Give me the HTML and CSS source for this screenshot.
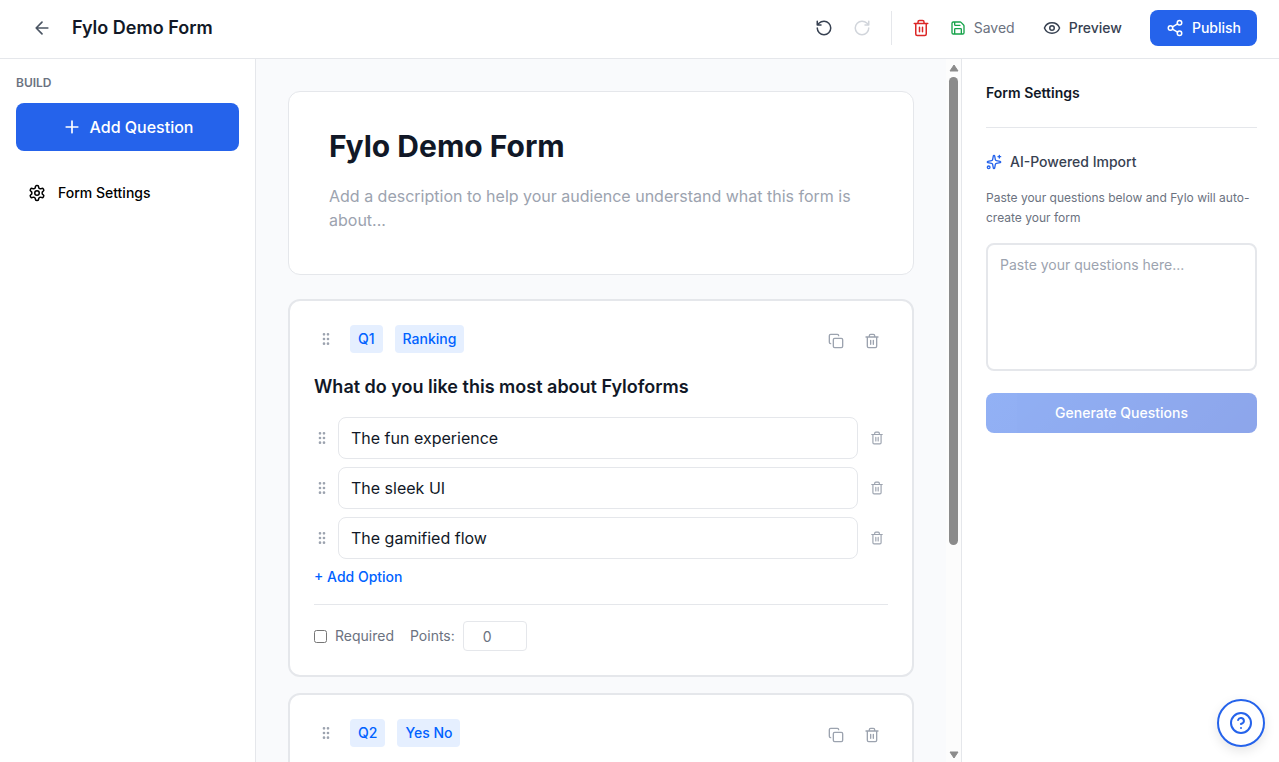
FILE: index.html
```html
<!DOCTYPE html>
<html lang="en">
<head>
    <meta charset="UTF-8">
    <meta name="viewport" content="width=device-width, initial-scale=1.0">
    <title>Fylo Demo Form</title>
    <link rel="stylesheet" href="styles.css">
</head>
<body>
    <!-- Shared icons -->
    <svg class="icon-defs" aria-hidden="true">
        <symbol id="icon-trash" viewBox="0 0 24 24">
            <path d="M3 6h18M19 6v14a2 2 0 0 1-2 2H7a2 2 0 0 1-2-2V6M8 6V4a2 2 0 0 1 2-2h4a2 2 0 0 1 2 2v2M10 11v6M14 11v6"/>
        </symbol>
        <symbol id="icon-copy" viewBox="0 0 24 24">
            <rect x="8" y="8" width="14" height="14" rx="2"/>
            <path d="M4 16c-1.1 0-2-.9-2-2V4c0-1.1.9-2 2-2h10c1.1 0 2 .9 2 2"/>
        </symbol>
        <symbol id="icon-grip" viewBox="0 0 24 24">
            <circle cx="9" cy="5" r="1"/><circle cx="9" cy="12" r="1"/><circle cx="9" cy="19" r="1"/>
            <circle cx="15" cy="5" r="1"/><circle cx="15" cy="12" r="1"/><circle cx="15" cy="19" r="1"/>
        </symbol>
    </svg>

    <header class="topbar">
        <div class="topbar-left">
            <button class="icon-btn back-btn" aria-label="Back">
                <svg class="icon icon-20" viewBox="0 0 24 24"><path d="m12 19-7-7 7-7M19 12H5"/></svg>
            </button>
            <h1 class="topbar-title">Fylo Demo Form</h1>
        </div>
        <div class="topbar-right">
            <div class="tools">
                <div class="history">
                    <button class="icon-btn undo-btn" aria-label="Undo">
                        <svg class="icon icon-18" viewBox="0 0 24 24"><path d="M3 12a9 9 0 1 0 9-9 9.75 9.75 0 0 0-6.74 2.74L3 8M3 3v5h5"/></svg>
                    </button>
                    <button class="icon-btn redo-btn" aria-label="Redo" disabled>
                        <svg class="icon icon-18" viewBox="0 0 24 24"><path d="M21 12a9 9 0 1 1-9-9c2.52 0 4.93 1 6.74 2.74L21 8M21 3v5h-5"/></svg>
                    </button>
                </div>
                <span class="divider"></span>
                <button class="icon-btn delete-btn" aria-label="Delete form">
                    <svg class="icon icon-18"><use href="#icon-trash"/></svg>
                </button>
            </div>
            <div class="actions">
                <span class="save-status">
                    <svg class="icon icon-16" viewBox="0 0 24 24"><path d="M15.2 3a2 2 0 0 1 1.4.6l3.8 3.8a2 2 0 0 1 .6 1.4V19a2 2 0 0 1-2 2H5a2 2 0 0 1-2-2V5a2 2 0 0 1 2-2zM17 21v-7a1 1 0 0 0-1-1H8a1 1 0 0 0-1 1v7M7 3v4a1 1 0 0 0 1 1h7"/></svg>
                    Saved
                </span>
                <button class="btn preview-btn">
                    <svg class="icon icon-18" viewBox="0 0 24 24"><path d="M2.06 12.35a1 1 0 0 1 0-.7 10.75 10.75 0 0 1 19.88 0 1 1 0 0 1 0 .7 10.75 10.75 0 0 1-19.88 0"/><circle cx="12" cy="12" r="3"/></svg>
                    Preview
                </button>
                <button class="btn publish-btn">
                    <svg class="icon icon-18" viewBox="0 0 24 24"><circle cx="18" cy="5" r="3"/><circle cx="6" cy="12" r="3"/><circle cx="18" cy="19" r="3"/><path d="m8.59 13.51 6.83 3.98M15.41 6.51l-6.82 3.98"/></svg>
                    Publish
                </button>
            </div>
        </div>
    </header>

    <div class="workspace">
        <aside class="sidebar">
            <h2 class="sidebar-label">BUILD</h2>
            <button class="add-question">
                <svg class="icon icon-20" viewBox="0 0 24 24"><path d="M5 12h14M12 5v14"/></svg>
                Add Question
            </button>
            <button class="nav-item">
                <svg class="icon icon-18" viewBox="0 0 24 24"><path d="M12.22 2h-.44a2 2 0 0 0-2 2v.18a2 2 0 0 1-1 1.73l-.43.25a2 2 0 0 1-2 0l-.15-.08a2 2 0 0 0-2.73.73l-.22.38a2 2 0 0 0 .73 2.73l.15.1a2 2 0 0 1 1 1.72v.51a2 2 0 0 1-1 1.74l-.15.09a2 2 0 0 0-.73 2.73l.22.38a2 2 0 0 0 2.73.73l.15-.08a2 2 0 0 1 2 0l.43.25a2 2 0 0 1 1 1.73V20a2 2 0 0 0 2 2h.44a2 2 0 0 0 2-2v-.18a2 2 0 0 1 1-1.73l.43-.25a2 2 0 0 1 2 0l.15.08a2 2 0 0 0 2.73-.73l.22-.39a2 2 0 0 0-.73-2.73l-.15-.08a2 2 0 0 1-1-1.74v-.5a2 2 0 0 1 1-1.74l.15-.09a2 2 0 0 0 .73-2.73l-.22-.38a2 2 0 0 0-2.73-.73l-.15.08a2 2 0 0 1-2 0l-.43-.25a2 2 0 0 1-1-1.73V4a2 2 0 0 0-2-2z"/><circle cx="12" cy="12" r="3"/></svg>
                Form Settings
            </button>
        </aside>

        <main class="canvas">
            <section class="card intro-card">
                <input class="form-title" type="text" value="Fylo Demo Form" aria-label="Form title">
                <textarea class="form-description" aria-label="Form description" placeholder="Add a description to help your audience understand what this form is about..."></textarea>
            </section>

            <section class="card question-card">
                <div class="question-head">
                    <span class="grip"><svg class="icon icon-16"><use href="#icon-grip"/></svg></span>
                    <span class="badge">Q1</span>
                    <span class="badge">Ranking</span>
                    <div class="question-actions">
                        <button class="icon-btn" aria-label="Duplicate question"><svg class="icon icon-16"><use href="#icon-copy"/></svg></button>
                        <button class="icon-btn" aria-label="Delete question"><svg class="icon icon-16"><use href="#icon-trash"/></svg></button>
                    </div>
                </div>
                <input class="question-text" type="text" value="What do you like this most about Fyloforms" aria-label="Question text">
                <div class="options">
                    <div class="option">
                        <svg class="icon icon-16"><use href="#icon-grip"/></svg>
                        <input class="option-input" type="text" value="The fun experience" aria-label="Option 1">
                        <button class="option-delete" aria-label="Delete option 1"><svg class="icon icon-14"><use href="#icon-trash"/></svg></button>
                    </div>
                    <div class="option">
                        <svg class="icon icon-16"><use href="#icon-grip"/></svg>
                        <input class="option-input" type="text" value="The sleek UI" aria-label="Option 2">
                        <button class="option-delete" aria-label="Delete option 2"><svg class="icon icon-14"><use href="#icon-trash"/></svg></button>
                    </div>
                    <div class="option">
                        <svg class="icon icon-16"><use href="#icon-grip"/></svg>
                        <input class="option-input" type="text" value="The gamified flow" aria-label="Option 3">
                        <button class="option-delete" aria-label="Delete option 3"><svg class="icon icon-14"><use href="#icon-trash"/></svg></button>
                    </div>
                </div>
                <button class="add-option">+ Add Option</button>
                <div class="question-foot">
                    <label class="required"><input type="checkbox"> Required</label>
                    <label class="points">Points: <input type="number" value="0"></label>
                </div>
            </section>

            <section class="card question-card">
                <div class="question-head">
                    <span class="grip"><svg class="icon icon-16"><use href="#icon-grip"/></svg></span>
                    <span class="badge">Q2</span>
                    <span class="badge">Yes No</span>
                    <div class="question-actions">
                        <button class="icon-btn" aria-label="Duplicate question"><svg class="icon icon-16"><use href="#icon-copy"/></svg></button>
                        <button class="icon-btn" aria-label="Delete question"><svg class="icon icon-16"><use href="#icon-trash"/></svg></button>
                    </div>
                </div>
            </section>
        </main>

        <div class="scrollbar" aria-hidden="true">
            <svg class="scroll-arrow" viewBox="0 0 10 8"><path d="M5 1 9 7H1z"/></svg>
            <div class="scroll-track"><div class="scroll-thumb"></div></div>
            <svg class="scroll-arrow" viewBox="0 0 10 8"><path d="M5 7 1 1h8z"/></svg>
        </div>

        <aside class="settings">
            <h2 class="settings-title">Form Settings</h2>
            <label class="import-title" for="import-text">
                <svg class="icon icon-16" viewBox="0 0 24 24"><path d="M11.017 2.814a1 1 0 0 1 1.966 0l1.051 5.558a2 2 0 0 0 1.594 1.594l5.558 1.051a1 1 0 0 1 0 1.966l-5.558 1.051a2 2 0 0 0-1.594 1.594l-1.051 5.558a1 1 0 0 1-1.966 0l-1.051-5.558a2 2 0 0 0-1.594-1.594l-5.558-1.051a1 1 0 0 1 0-1.966l5.558-1.051a2 2 0 0 0 1.594-1.594zM20 2v4M22 4h-4"/><circle cx="4" cy="20" r="2"/></svg>
                AI-Powered Import
            </label>
            <p class="import-help">Paste your questions below and Fylo will auto-create your form</p>
            <textarea class="import-text" id="import-text" placeholder="Paste your questions here..."></textarea>
            <button class="generate-btn" disabled>Generate Questions</button>
        </aside>
    </div>

    <button class="help-btn" aria-label="Help">
        <svg class="icon icon-24" viewBox="0 0 24 24"><circle cx="12" cy="12" r="10"/><path d="M9.09 9a3 3 0 0 1 5.83 1c0 2-3 3-3 3M12 17h.01"/></svg>
    </button>
</body>
</html>
```

FILE: styles.css
```css
* {
    box-sizing: border-box;
}
body {
    margin: 0;
    height: 100vh;
    display: flex;
    flex-direction: column;
    overflow: hidden;
    background-color: #fff;
    font-family: Inter, sans-serif;
    font-size: 14px;
    line-height: 20px;
    color: #111827;
}
h1, h2, p {
    margin: 0;
}
button, input, textarea {
    font: inherit;
    color: inherit;
    margin: 0;
}
button {
    display: flex;
    align-items: center;
    justify-content: center;
    padding: 0;
    background: none;
    border: none;
    cursor: pointer;
}
textarea {
    display: block;
    width: 100%;
    resize: none;
}
::placeholder {
    color: #9ca3af;
}

/* Icons */
.icon-defs {
    display: none;
}
.icon {
    flex: none;
    fill: none;
    stroke: currentColor;
    stroke-width: 2;
    stroke-linecap: round;
    stroke-linejoin: round;
}
.icon-14 {
    width: 14px;
    height: 14px;
}
.icon-16 {
    width: 16px;
    height: 16px;
}
.icon-18 {
    width: 18px;
    height: 18px;
}
.icon-20 {
    width: 20px;
    height: 20px;
}
.icon-24 {
    width: 24px;
    height: 24px;
}

/* Top bar */
.topbar {
    flex: none;
    display: flex;
    align-items: center;
    justify-content: space-between;
    padding: 10px 22px 12px 24px;
    border-bottom: 1px solid #e5e7eb;
}
.topbar-left {
    display: flex;
    align-items: center;
    gap: 12px;
}
.topbar-title {
    font-size: 18px;
    font-weight: 600;
    line-height: 28px;
}
.topbar-right, .tools {
    display: flex;
    align-items: center;
    gap: 12px;
}
.history {
    display: flex;
    gap: 4px;
}
.actions {
    display: flex;
    align-items: center;
    gap: 16px;
}
.icon-btn {
    padding: 8px;
}
.back-btn {
    color: #4b5563;
}
.undo-btn {
    color: #374151;
}
.redo-btn {
    color: #d1d5db;
}
.delete-btn {
    color: #dc2626;
}
.divider {
    width: 1px;
    height: 34px;
    background-color: #e5e7eb;
}
.save-status {
    display: flex;
    align-items: center;
    gap: 8px;
    color: #6b7280;
}
.save-status .icon {
    color: #16a34a;
}
.btn {
    gap: 8px;
    height: 36px;
    border-radius: 8px;
    font-weight: 500;
}
.preview-btn {
    padding: 0 12px;
    color: #374151;
}
.publish-btn {
    padding: 0 16px;
    background-color: #2563eb;
    color: #fff;
}

/* Left sidebar */
.workspace {
    flex: 1;
    min-height: 0;
    display: flex;
}
.sidebar {
    flex: 0 0 256px;
    padding: 16px;
    border-right: 1px solid #e5e7eb;
}
.sidebar-label {
    margin-bottom: 12px;
    font-size: 12px;
    font-weight: 600;
    line-height: 16px;
    color: #6b7280;
}
.add-question {
    gap: 8px;
    width: 100%;
    height: 48px;
    border-radius: 8px;
    background-color: #2563eb;
    color: #fff;
    font-size: 16px;
    font-weight: 500;
}
.nav-item {
    justify-content: flex-start;
    gap: 12px;
    width: 100%;
    margin-top: 24px;
    padding: 8px 12px;
    color: #000;
    font-weight: 500;
}

/* Form canvas */
.canvas {
    flex: 1;
    min-width: 0;
    padding: 32px;
    overflow: hidden;
    background-color: #f9fafc;
}
.card {
    background-color: #fff;
    border-radius: 12px;
}
.intro-card {
    margin-bottom: 24px;
    padding: 32px 40px;
    border: 1px solid #e5e7eb;
}
.form-title {
    display: block;
    width: 100%;
    height: 44px;
    margin-bottom: 16px;
    padding: 0;
    border: none;
    font-size: 30px;
    font-weight: 700;
}
.form-description {
    height: 58px;
    padding: 0;
    border: none;
    font-size: 16px;
    line-height: 24px;
}
.question-card {
    margin-bottom: 16px;
    padding: 24px;
    border: 2px solid #e5e7eb;
}
.question-head {
    display: flex;
    align-items: flex-start;
    gap: 12px;
}
.grip {
    display: flex;
    align-items: center;
    justify-content: center;
    width: 24px;
    height: 28px;
    color: #9ca3af;
}
.badge {
    padding: 4px 8px;
    border-radius: 4px;
    background-color: #e5efff;
    color: #0062ff;
    font-weight: 500;
}
.question-actions {
    display: flex;
    gap: 4px;
    margin-left: auto;
    color: #9ca3af;
}
.question-text {
    display: block;
    width: 100%;
    height: 26px;
    margin: 16px 0 18px;
    padding: 0;
    border: none;
    font-size: 18px;
    font-weight: 600;
}
.options {
    display: flex;
    flex-direction: column;
    gap: 8px;
}
.option {
    display: flex;
    align-items: center;
    gap: 8px;
    color: #9ca3af;
}
.option-input {
    flex: 1;
    min-width: 0;
    height: 42px;
    padding: 0 12px;
    border: 1px solid #e5e7eb;
    border-radius: 8px;
    font-size: 16px;
    color: #111827;
}
.option-delete {
    padding: 4px;
}
.add-option {
    height: 20px;
    margin: 8px 0 17px;
    color: #0062ff;
    font-weight: 500;
}
.question-foot {
    display: flex;
    align-items: center;
    gap: 16px;
    padding-top: 16px;
    border-top: 1px solid #e5e7eb;
    color: #6b7280;
}
.required, .points {
    display: flex;
    align-items: center;
    gap: 8px;
}
.required input {
    width: 13px;
    height: 13px;
}
.points input {
    width: 64px;
    height: 30px;
    padding: 0 8px;
    border: 1px solid #e5e7eb;
    border-radius: 4px;
    text-align: center;
}
.points input::-webkit-inner-spin-button {
    opacity: 0;
}

/* Scrollbar */
.scrollbar {
    flex: 0 0 15px;
    display: flex;
    flex-direction: column;
    align-items: center;
    gap: 5px;
    padding: 5px 0 3px;
    background-color: #fcfcfc;
}
.scroll-arrow {
    width: 10px;
    height: 8px;
    fill: #8b8b8b;
    stroke: #8b8b8b;
    stroke-linejoin: round;
}
.scroll-track {
    flex: 1;
    width: 9px;
}
.scroll-thumb {
    height: 70%;
    border-radius: 5px;
    background-color: #8b8b8b;
}

/* Settings panel */
.settings {
    flex: 0 0 318px;
    padding: 24px 22px 24px 24px;
    border-left: 1px solid #e5e7eb;
}
.settings-title {
    margin-bottom: 24px;
    padding-bottom: 24px;
    border-bottom: 1px solid #e5e7eb;
    font-size: 14px;
    font-weight: 600;
}
.import-title {
    display: flex;
    align-items: center;
    gap: 8px;
    margin-bottom: 16px;
    color: #374151;
    font-weight: 500;
}
.import-title .icon {
    color: #2563eb;
}
.import-help {
    margin-bottom: 15px;
    font-size: 12px;
    color: #6b7280;
}
.import-text {
    height: 128px;
    margin-bottom: 22px;
    padding: 10px 12px;
    border: 2px solid #e5e7eb;
    border-radius: 8px;
}
.generate-btn {
    width: 100%;
    height: 40px;
    border-radius: 8px;
    background: linear-gradient(135deg, #2563eb, #1d4ed8);
    color: #fff;
    font-weight: 500;
    opacity: 0.5;
}

/* Floating help */
.help-btn {
    position: fixed;
    right: 14px;
    bottom: 15px;
    width: 48px;
    height: 48px;
    border: 2px solid #2563eb;
    border-radius: 50%;
    background-color: #fff;
    color: #2563eb;
    box-shadow: 0 4px 12px rgba(0, 0, 0, 0.1);
}
```
